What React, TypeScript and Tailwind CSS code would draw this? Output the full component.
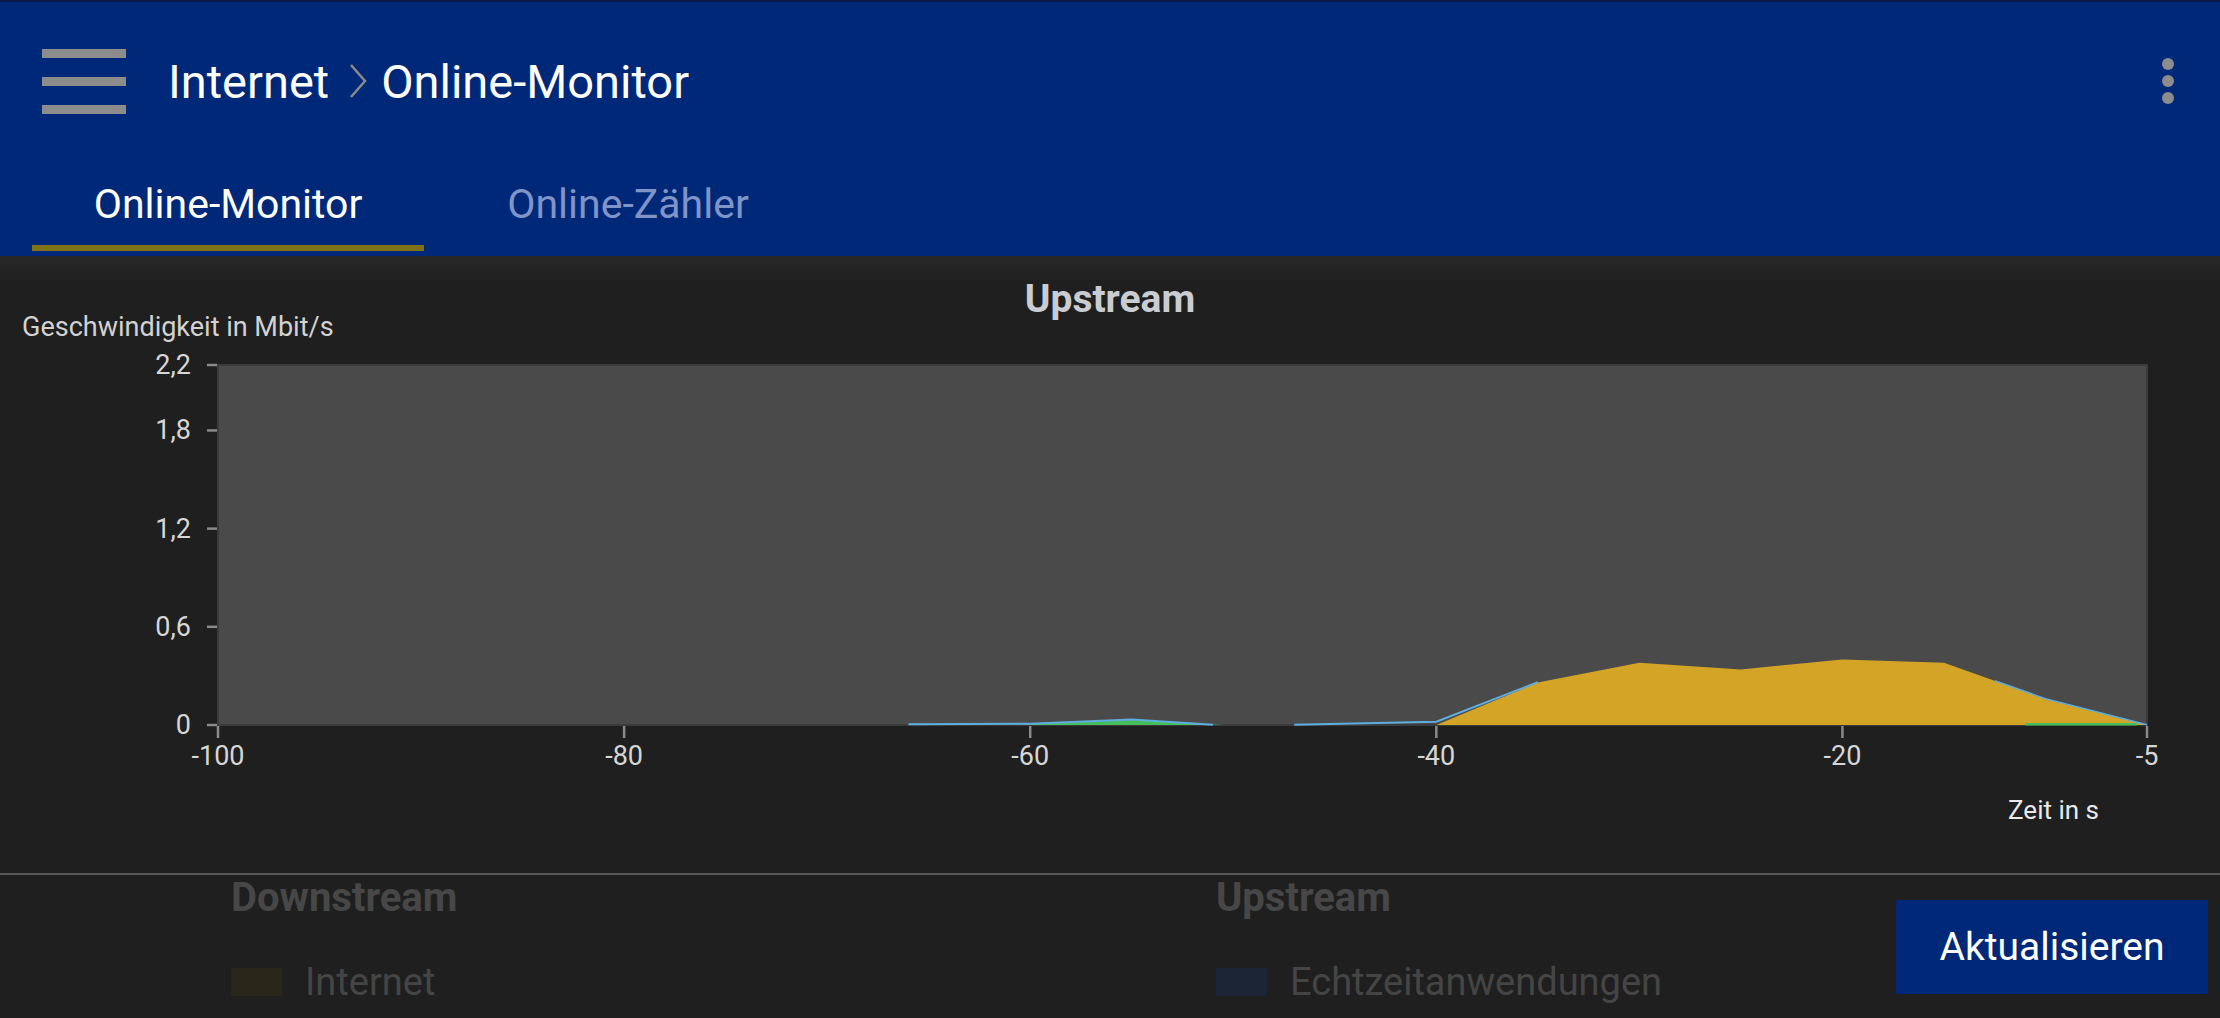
import React from "react";

const X = (v: number) => 218 + ((v + 100) * 1929) / 95;
const Y = (v: number) => 383 - (v * 360) / 2.2;
const pts = (a: number[][]) => a.map(([x, y]) => `${X(x).toFixed(1)},${Y(y).toFixed(1)}`).join(" ");

const yellow = [
  [-40, 0],
  [-35, 0.26],
  [-30, 0.38],
  [-25, 0.34],
  [-20, 0.4],
  [-15, 0.38],
  [-10, 0.16],
  [-5, 0],
];

const yTicks = [
  { v: 2.2, l: "2,2" },
  { v: 1.8, l: "1,8" },
  { v: 1.2, l: "1,2" },
  { v: 0.6, l: "0,6" },
  { v: 0, l: "0" },
];
const xTicks = [-100, -80, -60, -40, -20, -5];

function Chart() {
  return (
    <svg width={2220} height={440} className="block font-['Roboto',sans-serif]">
      <rect x={218} y={23} width={1929} height={360} fill="#4a4a4a" stroke="#3b3b3b" strokeWidth={2} />
      <polygon points={pts(yellow)} fill="#d3a425" />
      <polygon points={pts([[-61, 0], [-55, 0.03], [-50.5, 0]])} fill="#46bf5a" />
      <polyline points={pts([[-66, 0.004], [-60, 0.008], [-55, 0.034], [-51, 0.002]])} fill="none" stroke="#5eaee0" strokeWidth={2} />
      <polyline points={pts([[-47, 0.002], [-40, 0.02], [-35, 0.262]])} fill="none" stroke="#5eaee0" strokeWidth={2} />
      <polyline points={pts([[-12.5, 0.27], [-10, 0.161], [-5, 0.002]])} fill="none" stroke="#5eaee0" strokeWidth={1.5} />
      <polyline points={pts([[-11, 0.004], [-5.5, 0.004]])} fill="none" stroke="#46bf5a" strokeWidth={2.5} />
      {yTicks.map((t) => (
        <g key={t.l}>
          <line x1={207} x2={217} y1={Y(t.v)} y2={Y(t.v)} stroke="#8a8a8a" strokeWidth={2.5} />
          <text x={191} y={Y(t.v)} textAnchor="end" dominantBaseline="central" fontSize={27} fill="#d6d6d6">
            {t.l}
          </text>
        </g>
      ))}
      {xTicks.map((v) => (
        <g key={v}>
          <line x1={X(v)} x2={X(v)} y1={384} y2={396} stroke="#8a8a8a" strokeWidth={2.5} />
          <text x={X(v)} y={414} textAnchor="middle" dominantBaseline="central" fontSize={27} fill="#d6d6d6">
            {v}
          </text>
        </g>
      ))}
    </svg>
  );
}

export default function App() {
  return (
    <div className="w-[2220px] h-[1018px] overflow-hidden bg-[#1f1f1f] flex flex-col font-['Roboto',sans-serif]">
      <header className="h-[256px] shrink-0 bg-[#002878] border-t-2 border-[#0b1a45] flex flex-col">
        <div className="h-[158px] flex items-center pl-[42px] pr-[46px]">
          <div className="flex flex-col gap-[19px]">
            <div className="w-[84px] h-[9px] bg-[#8c8c8c]" />
            <div className="w-[84px] h-[9px] bg-[#8c8c8c]" />
            <div className="w-[84px] h-[9px] bg-[#8c8c8c]" />
          </div>
          <div className="ml-[42px] flex items-center text-white text-[47px] leading-none">
            <span>Internet</span>
            <svg width="18" height="34" viewBox="0 0 18 34" className="ml-[20px] mr-[14px]">
              <polyline points="2,1 16,17 2,33" fill="none" stroke="#8a8a8a" strokeWidth="2.5" />
            </svg>
            <span>Online-Monitor</span>
          </div>
          <div className="ml-auto flex flex-col gap-[5px]">
            <div className="w-[12px] h-[12px] rounded-full bg-[#8c8c8c]" />
            <div className="w-[12px] h-[12px] rounded-full bg-[#8c8c8c]" />
            <div className="w-[12px] h-[12px] rounded-full bg-[#8c8c8c]" />
          </div>
        </div>
        <div className="h-[96px] flex items-start pl-[32px]">
          <div className="w-[392px] flex flex-col items-center">
            <div className="h-[85px] pt-[4px] leading-[80px] text-[41px] text-white">Online-Monitor</div>
            <div className="w-full h-[6px] bg-[#7f7316]" />
          </div>
          <div className="w-[392px] pl-[16px] flex flex-col items-center">
            <div className="h-[85px] pt-[4px] leading-[80px] text-[41px] text-[#8194c8]">Online-Zähler</div>
          </div>
        </div>
      </header>
      <section className="h-[617px] shrink-0 flex flex-col bg-[linear-gradient(to_bottom,#282828,#1f1f1f_26px)]">
        <div className="mt-[24px] h-[38px] leading-[38px] text-center text-[39px] font-bold text-[#c9cdd2]">Upstream</div>
        <div className="-mt-[6px] h-[30px] leading-[30px] pl-[22px] text-[27px] text-[#d2d2d2]">Geschwindigkeit in Mbit/s</div>
        <Chart />
        <div className="mt-[13px] h-[30px] leading-[30px] text-right pr-[121px] text-[26px] text-[#eaeaea]">Zeit in s</div>
      </section>
      <div className="flex-1 border-t-2 border-[#575757] flex items-start pl-[231px]">
        <div className="w-[985px] flex flex-col">
          <div className="mt-[1px] h-[44px] leading-[44px] text-[40px] font-bold text-[#474747]">Downstream</div>
          <div className="mt-[42px] h-[40px] flex items-center">
            <div className="w-[51px] h-[28px] bg-[#29261a]" />
            <span className="ml-[23px] text-[38px] leading-[40px] text-[#454545]">Internet</span>
          </div>
        </div>
        <div className="flex-1 flex flex-col">
          <div className="mt-[1px] h-[44px] leading-[44px] text-[40px] font-bold text-[#474747]">Upstream</div>
          <div className="mt-[42px] h-[40px] flex items-center">
            <div className="w-[51px] h-[28px] bg-[#1b2536]" />
            <span className="ml-[23px] text-[38px] leading-[40px] text-[#454545]">Echtzeitanwendungen</span>
          </div>
        </div>
        <button className="mt-[25px] mr-[12px] w-[312px] h-[94px] bg-[#002878] text-white text-[39px] leading-none flex items-center justify-center">
          Aktualisieren
        </button>
      </div>
    </div>
  );
}
